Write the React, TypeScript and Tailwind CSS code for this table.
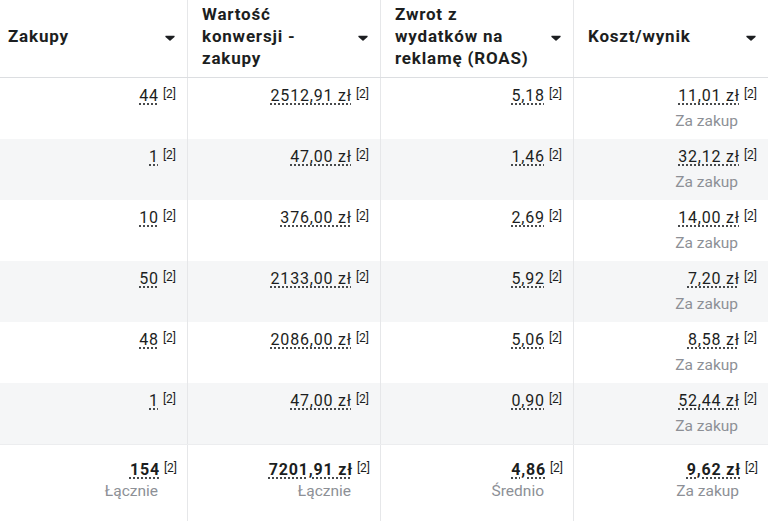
import React from "react";

type Cell = { value: string; sub?: string };

const headers = [
  ["Zakupy"],
  ["Wartość", "konwersji -", "zakupy"],
  ["Zwrot z", "wydatków na", "reklamę (ROAS)"],
  ["Koszt/wynik"],
];

const rows: Cell[][] = [
  [{ value: "44" }, { value: "2512,91 zł" }, { value: "5,18" }, { value: "11,01 zł", sub: "Za zakup" }],
  [{ value: "1" }, { value: "47,00 zł" }, { value: "1,46" }, { value: "32,12 zł", sub: "Za zakup" }],
  [{ value: "10" }, { value: "376,00 zł" }, { value: "2,69" }, { value: "14,00 zł", sub: "Za zakup" }],
  [{ value: "50" }, { value: "2133,00 zł" }, { value: "5,92" }, { value: "7,20 zł", sub: "Za zakup" }],
  [{ value: "48" }, { value: "2086,00 zł" }, { value: "5,06" }, { value: "8,58 zł", sub: "Za zakup" }],
  [{ value: "1" }, { value: "47,00 zł" }, { value: "0,90" }, { value: "52,44 zł", sub: "Za zakup" }],
];

const totals: Cell[] = [
  { value: "154", sub: "Łącznie" },
  { value: "7201,91 zł", sub: "Łącznie" },
  { value: "4,86", sub: "Średnio" },
  { value: "9,62 zł", sub: "Za zakup" },
];

const cols = "grid grid-cols-[188px_193px_193px_194px]";

function Caret() {
  return (
    <svg width="10" height="6" viewBox="0 0 10 6" className="shrink-0">
      <path d="M1 0.8h8c0.6 0 0.9 0.7 0.5 1.1L5.5 5.4c-0.3 0.3-0.7 0.3-1 0L0.5 1.9C0.1 1.5 0.4 0.8 1 0.8z" fill="#1c1e21" />
    </svg>
  );
}

function Value({ cell, bold, subLeading }: { cell: Cell; bold?: boolean; subLeading: string }) {
  return (
    <div className="flex flex-col items-end">
      <div className="flex items-start leading-6">
        <span
          className={
            "text-[16px] tracking-[0.8px] underline decoration-dotted underline-offset-[3px] decoration-[#1c1e21] " +
            (bold ? "font-bold" : "")
          }
        >
          {cell.value}
        </span>
        <span className="ml-1 mt-[3px] text-[12px] leading-[14px]">[2]</span>
      </div>
      {cell.sub && (
        <span className={"pr-[19px] text-[15.5px] text-[#8d9096] " + subLeading}>{cell.sub}</span>
      )}
    </div>
  );
}

export default function App() {
  return (
    <div className="h-[521px] w-[768px] overflow-hidden bg-white font-[Roboto,sans-serif] text-[15px] text-[#1c1e21]">
      <div className={cols + " h-[78px] border-b border-[#dcdee1]"}>
        {headers.map((lines, i) => (
          <div
            key={i}
            className={
              "flex items-center justify-between pb-[5px] pr-3 " +
              (i === 0 ? "pl-2 " : "pl-[14px] ") +
              (i < 3 ? "border-r border-[#e6e7e9]" : "")
            }
          >
            <div className="text-[17px] font-bold leading-[22px] tracking-[0.8px]">
              {lines.map((l) => (
                <div key={l}>{l}</div>
              ))}
            </div>
            <div className="pt-[3px]">
              <Caret />
            </div>
          </div>
        ))}
      </div>
      {rows.map((row, r) => (
        <div key={r} className={cols + " h-[61px] " + (r % 2 === 1 ? "bg-[#f5f6f7]" : "bg-white")}>
          {row.map((cell, c) => (
            <div
              key={c}
              className={"pr-[11px] pt-[6px] " + (c < 3 ? "border-r border-[#e6e7e9]" : "")}
            >
              <Value cell={cell} subLeading="leading-[26px]" />
            </div>
          ))}
        </div>
      ))}
      <div className={cols + " h-[78px] border-t border-[#ecedef]"}>
        {totals.map((cell, c) => (
          <div
            key={c}
            className={"pr-[10px] pt-[13px] " + (c < 3 ? "border-r border-[#e6e7e9]" : "")}
          >
            <Value cell={cell} bold subLeading="leading-[18px]" />
          </div>
        ))}
      </div>
    </div>
  );
}
